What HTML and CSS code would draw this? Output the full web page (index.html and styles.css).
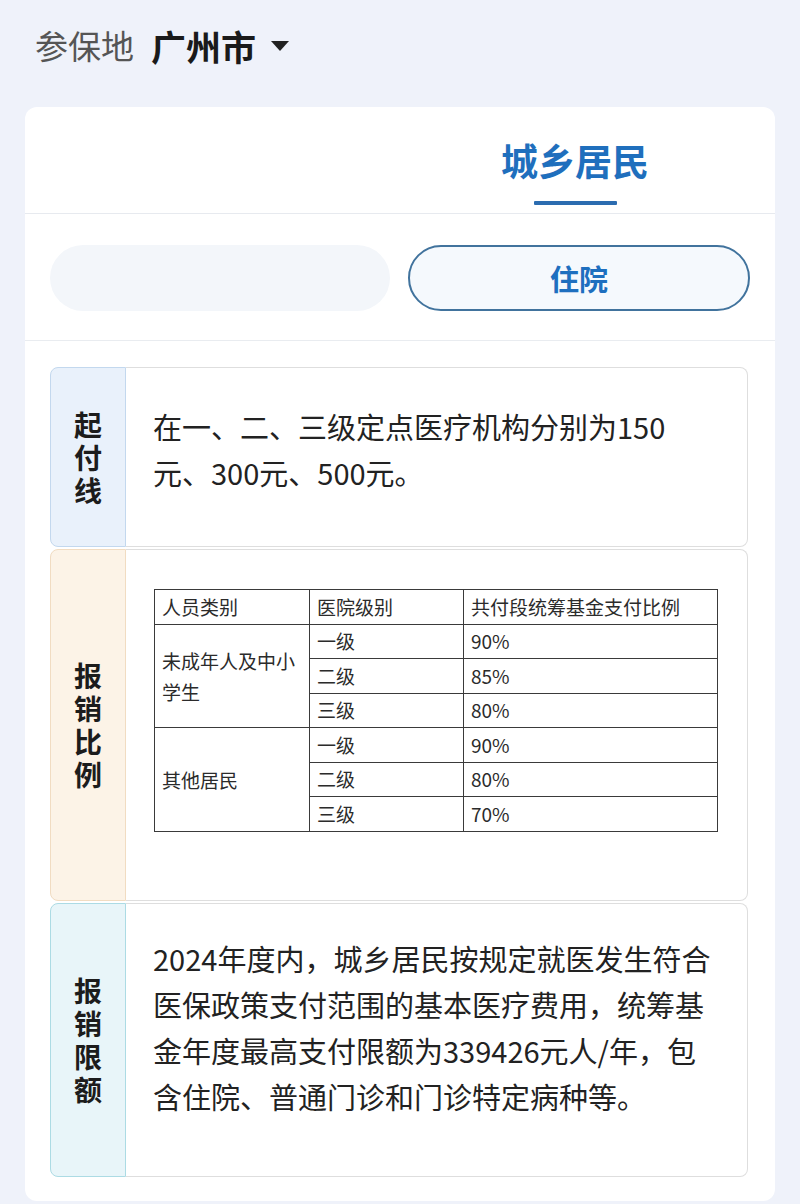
FILE: index.html
```html
<!DOCTYPE html>
<html lang="zh-CN">
<head>
<meta charset="utf-8">
<title>参保地 广州市</title>
<link rel="stylesheet" href="styles.css">
</head>
<body>
<header class="top">
  <span class="top-label">参保地</span>
  <span class="top-city">广州市</span>
  <span class="caret"></span>
</header>
<main class="card">
  <nav class="tabs">
    <div class="tab active">
      <span class="tab-text">城乡居民</span>
      <span class="tab-line"></span>
    </div>
  </nav>
  <div class="pills">
    <div class="pill"></div>
    <div class="pill active">住院</div>
  </div>
  <section class="list">
    <div class="row">
      <div class="label label-blue"><span>起付线</span></div>
      <div class="content text t1">在一、二、三级定点医疗机构分别为150元、300元、500元。</div>
    </div>
    <div class="row">
      <div class="label label-beige"><span>报销比例</span></div>
      <div class="content tbl-wrap">
        <table class="ratio">
          <colgroup><col class="c1"><col class="c2"><col></colgroup>
          <tr><th>人员类别</th><th>医院级别</th><th>共付段统筹基金支付比例</th></tr>
          <tr><td rowspan="3" class="multi">未成年人及中小学生</td><td>一级</td><td>90%</td></tr>
          <tr><td>二级</td><td>85%</td></tr>
          <tr><td>三级</td><td>80%</td></tr>
          <tr><td rowspan="3" class="multi">其他居民</td><td>一级</td><td>90%</td></tr>
          <tr><td>二级</td><td>80%</td></tr>
          <tr><td>三级</td><td>70%</td></tr>
        </table>
      </div>
    </div>
    <div class="row row-last">
      <div class="label label-cyan"><span>报销限额</span></div>
      <div class="content text t3">2024年度内，城乡居民按规定就医发生符合医保政策支付范围的基本医疗费用，统筹基金年度最高支付限额为339426元人/年，包含住院、普通门诊和门诊特定病种等。</div>
    </div>
  </section>
</main>
</body>
</html>
```
FILE: styles.css
```css
* { box-sizing: border-box; }
html, body { margin: 0; padding: 0; }
body {
  width: 800px;
  height: 1204px;
  overflow: hidden;
  background: #eff2fa;
  font-family: "Noto Sans CJK SC", "Noto Sans", sans-serif;
}
.top {
  height: 90px;
  display: flex;
  align-items: center;
  padding-left: 35px;
  margin-bottom: 17px;
}
.top-label { font-size: 33px; color: #555; }
.top-city { font-size: 35px; font-weight: 700; color: #1a1a1a; margin-left: 17px; }
.caret {
  width: 0; height: 0;
  border-left: 9px solid transparent;
  border-right: 9px solid transparent;
  border-top: 10px solid #222;
  margin-left: 15px;
  margin-top: 2px;
}
.card {
  margin: 0 25px;
  background: #fff;
  border-radius: 12px;
  height: 1094px;
}
.tabs {
  height: 107px;
  display: flex;
  justify-content: flex-end;
  padding-right: 126px;
  border-bottom: 1px solid #e7eaef;
}
.tab {
  display: flex;
  flex-direction: column;
  align-items: center;
  padding-top: 31px;
}
.tab-text {
  font-size: 37px;
  line-height: 44px;
  font-weight: 700;
  color: #1f6fbd;
}
.tab-line {
  width: 83px;
  height: 4px;
  margin-top: 19px;
  background: #2b6cb0;
  border-radius: 1px;
}
.pills {
  height: 127px;
  display: grid;
  grid-template-columns: 340px 342px;
  gap: 18px;
  padding: 31px 25px 0;
  border-bottom: 1px solid #e9ecf0;
}
.pill {
  height: 66px;
  border-radius: 33px;
  background: #f3f6fa;
}
.pill.active {
  background: #f5f9fd;
  border: 2px solid #41739d;
  display: flex;
  align-items: center;
  justify-content: center;
  font-size: 29px;
  font-weight: 700;
  color: #1e6fbf;
}
.list {
  padding: 26px 27px 0 25px;
}
.row {
  display: flex;
  margin-bottom: 2px;
}
.row-last { margin-top: 1px; }
.label {
  width: 76px;
  flex: none;
  border: 1px solid;
  border-radius: 8px 0 0 8px;
  display: flex;
  align-items: center;
  justify-content: center;
  font-size: 28px;
  font-weight: 700;
  line-height: 33px;
  color: #1c1c1c;
}
.label span { display: block; width: 1.2em; text-align: center; }
.label-blue { background: #e9f1fb; border-color: #c3d8ee; }
.label-beige { background: #fcf3e7; border-color: #f1dcc2; }
.label-cyan { background: #e8f5f9; border-color: #acdbe4; }
.content {
  flex: 1;
  background: #fff;
  border: 1px solid #dedede;
  border-left: none;
  border-radius: 0 8px 8px 0;
}
.text {
  font-size: 29px;
  line-height: 46px;
  color: #222;
}
.t1 { padding: 35px 27px 51px 27px; }
.t3 { padding: 31px 27px 57px 27px; }
.tbl-wrap { padding: 39px 29px 68px 28px; }
.ratio {
  width: 100%;
  table-layout: fixed;
  border-collapse: collapse;
  font-size: 19px;
  color: #2b2b2b;
}
.ratio .c1 { width: 155px; }
.ratio .c2 { width: 154px; }
.ratio tr { height: 34.5px; }
.ratio th, .ratio td {
  border: 1.5px solid #3a3a3a;
  padding: 0 7px;
  text-align: left;
  font-weight: 400;
  vertical-align: middle;
  line-height: 24px;
}
.ratio td.multi { line-height: 31px; }
```
